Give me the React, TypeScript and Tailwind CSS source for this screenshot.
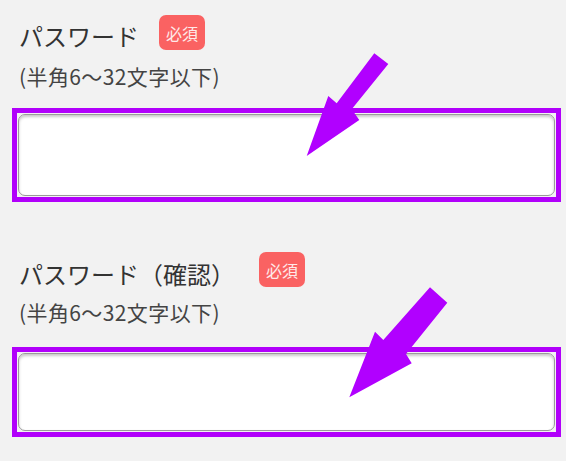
import React from 'react'

const font = { fontFamily: '"Noto Sans CJK JP", "Noto Sans", sans-serif' }

function Badge() {
  return (
    <span className="flex h-[35px] w-[46px] items-center justify-center rounded-[7px] bg-[#fa6262] text-[16px] leading-none text-[#ffe9e9]">
      必須
    </span>
  )
}

function Field({
  label,
  labelGap,
  labelTop,
  subTop,
  boxTop,
  inputHeight,
}: {
  label: string
  labelGap: string
  labelTop: string
  subTop: string
  boxTop: string
  inputHeight: string
}) {
  return (
    <div className="flex flex-col">
      {/* Label + required badge */}
      <div className="flex items-start pl-[19px]">
        <span className={`${labelTop} text-[24px] leading-[24px] text-[#333]`}>{label}</span>
        <span className={labelGap}>
          <Badge />
        </span>
      </div>

      {/* Hint */}
      <p className={`${subTop} pl-[19px] text-[21px] leading-[21px] tracking-[0.4px] text-[#444]`}>
        (半角6〜32文字以下)
      </p>

      {/* Highlighted input */}
      <div className={`${boxTop} ml-[12px] w-[549px] border-[5px] border-[#b100fb] p-px`}>
        <input
          type="password"
          className={`${inputHeight} block w-full rounded-[7px] border border-[#9a9a9a] bg-white shadow-[inset_0_2px_3px_rgba(0,0,0,0.22)] outline-none`}
        />
      </div>
    </div>
  )
}

export default function App() {
  return (
    <div className="relative h-[461px] w-[566px] overflow-hidden bg-[#f2f2f2] pt-[15px]" style={font}>
      <Field
        label="パスワード"
        labelGap="ml-[20px]"
        labelTop="mt-[9px]"
        subTop="mt-[16px]"
        boxTop="mt-[21px]"
        inputHeight="h-[82px]"
      />
      <div className="h-[50px]" />
      <Field
        label="パスワード（確認）"
        labelGap="ml-[24px]"
        labelTop="mt-[10px]"
        subTop="mt-[15px]"
        boxTop="mt-[24px]"
        inputHeight="h-[78px]"
      />

      {/* Arrows pointing at the inputs */}
      <svg className="pointer-events-none absolute inset-0" width="566" height="461" viewBox="0 0 566 461">
        <polygon
          points="374.3,53.3 388.3,64 351.7,109.3 359.3,120 306.7,156 328.3,96 336.7,103.3"
          fill="#b100ff"
        />
        <polygon
          points="430,287.3 447.3,302.7 406,354 411.7,363.3 349.3,397.3 375,331.7 383.3,340"
          fill="#b100ff"
        />
      </svg>
    </div>
  )
}
